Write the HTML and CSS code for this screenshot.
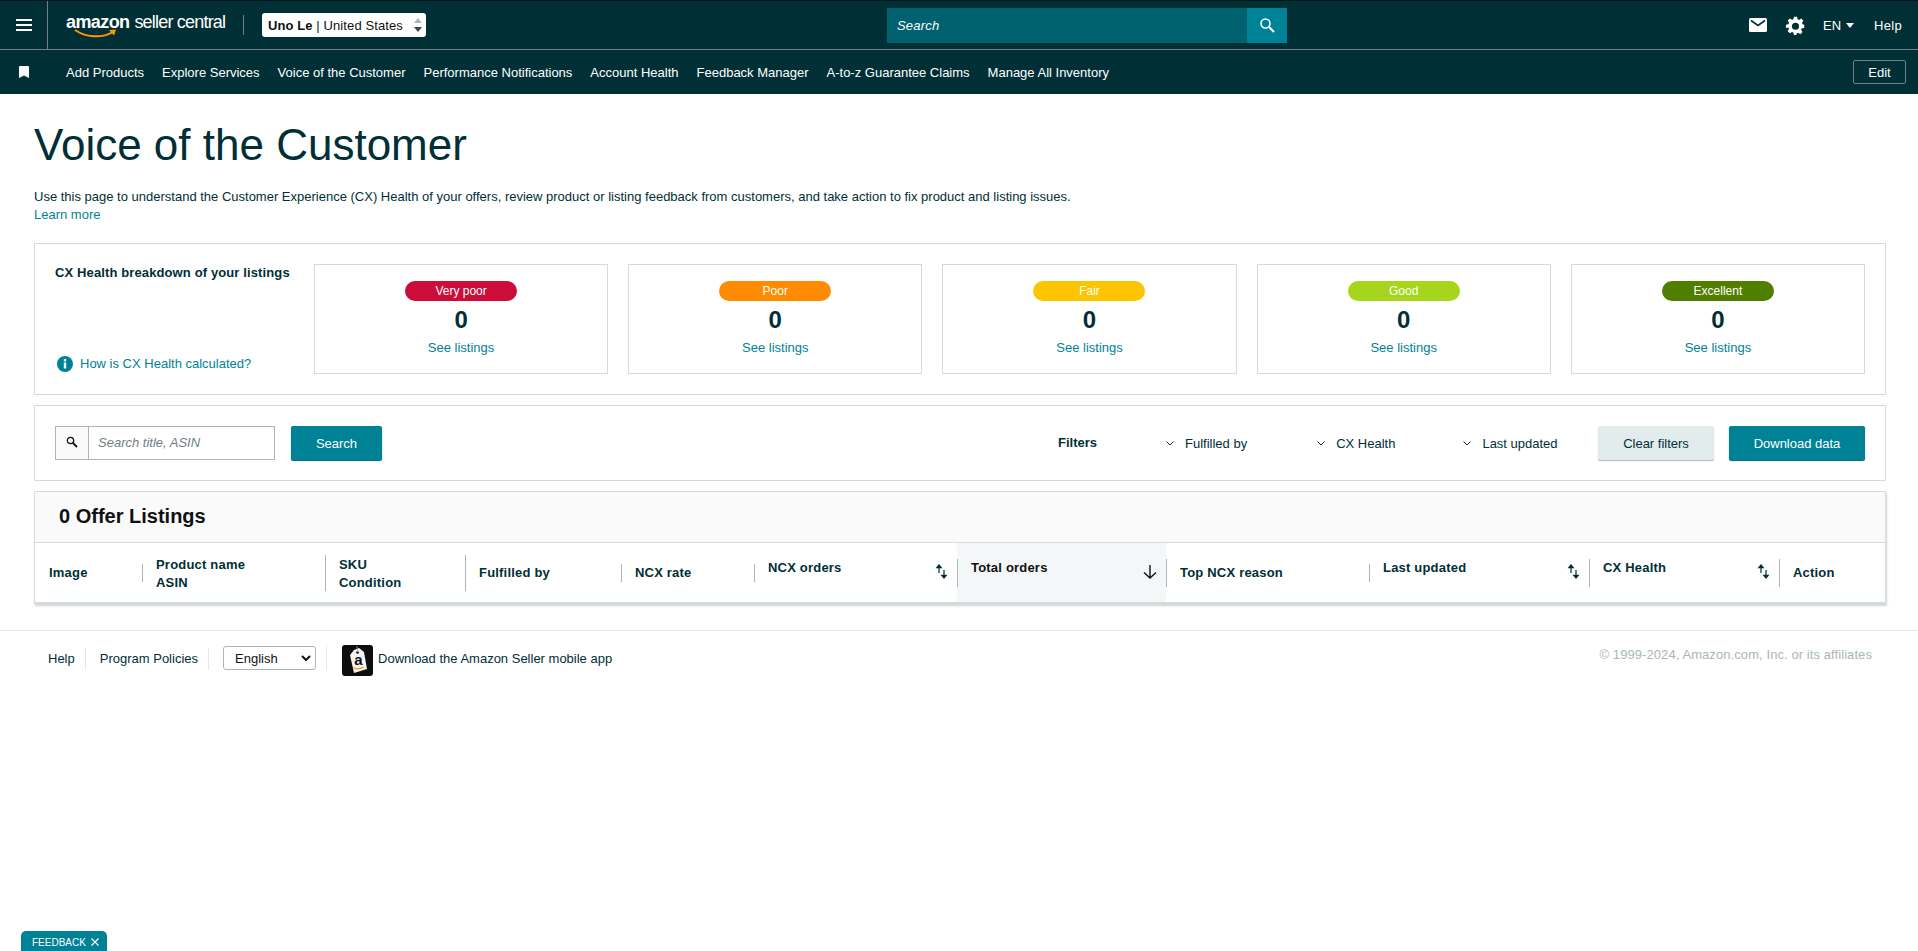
FILE: index.html
```html
<!DOCTYPE html>
<html lang="en">
<head>
  <meta charset="UTF-8">
  <title>Voice of the Customer</title>
  <link rel="stylesheet" href="styles.css">
</head>
<body>
  <header class="topbar">
    <div class="menu-cell">
      <svg class="menu-icon" viewBox="0 0 16 12" width="16" height="12"><path d="M0 1h16M0 6h16M0 11h16" stroke="#fff" stroke-width="2"/></svg>
    </div>
    <div class="logo">
      <span class="logo-az">amazon</span><span class="logo-sc">seller central</span>
      <svg class="swoosh" viewBox="0 0 44 10" width="44" height="10"><path d="M1 1c10 7 26 9 38 2" fill="none" stroke="#ff9900" stroke-width="2"/><path d="M35 1l7-.5-2 6z" fill="#ff9900"/></svg>
    </div>
    <div class="logo-sep"></div>
    <div class="account-select">
      <span><b>Uno Le</b> | United States</span>
      <span class="account-arrows"><i class="up"></i><i class="down"></i></span>
    </div>
    <div class="top-search">
      <span class="top-search-input">Search</span>
      <span class="top-search-btn">
        <svg viewBox="0 0 16 16" width="16" height="16"><circle cx="6.5" cy="6.5" r="4.5" fill="none" stroke="#fff" stroke-width="1.6"/><path d="M10 10l5 5" stroke="#fff" stroke-width="2"/></svg>
      </span>
    </div>
    <div class="top-right">
      <svg viewBox="0 0 18 14" width="18" height="14"><rect width="18" height="14" rx="1.5" fill="#fff"/><path d="M2 2.500l7 5 7-5" fill="none" stroke="#002f36" stroke-width="1.6"/></svg>
      <svg class="gear" viewBox="0 0 24 24" width="19" height="19"><path fill="#fff" fill-rule="evenodd" d="M10 1h4l.6 3.100 1.900.8 2.700-1.800 2.800 2.800-1.800 2.700.8 1.900L23 11v4l-3.100.6-.8 1.900 1.800 2.700-2.800 2.800-2.700-1.800-1.900.8L13 24h-3l-.6-3.100-1.900-.8-2.700 1.800-2.800-2.800 1.800-2.700-.8-1.900L0 15v-4l3.100-.6.8-1.900L2.100 5.800l2.800-2.800 2.700 1.800 1.900-.8zM12 8.500a4.500 4.500 0 1 0 0 9 4.500 4.500 0 0 0 0-9z"/></svg>
      <span class="lang">EN<i class="caret"></i></span>
      <span class="top-help">Help</span>
    </div>
  </header>

  <nav class="navbar">
    <svg class="bookmark" viewBox="0 0 10 12" width="10" height="12"><path d="M0 1a1 1 0 0 1 1-1h8a1 1 0 0 1 1 1v11L5 9.500 0 12z" fill="#fff"/></svg>
    <div class="nav-links">
      <a>Add Products</a>
      <a>Explore Services</a>
      <a>Voice of the Customer</a>
      <a>Performance Notifications</a>
      <a>Account Health</a>
      <a>Feedback Manager</a>
      <a>A-to-z Guarantee Claims</a>
      <a>Manage All Inventory</a>
    </div>
    <button class="edit-btn">Edit</button>
  </nav>

  <main class="page">
    <h1>Voice of the Customer</h1>
    <p class="intro">Use this page to understand the Customer Experience (CX) Health of your offers, review product or listing feedback from customers, and take action to fix product and listing issues.<br><a class="link">Learn more</a></p>

    <section class="box health">
      <div class="health-side">
        <strong>CX Health breakdown of your listings</strong>
        <a class="link how">
          <svg viewBox="0 0 16 16" width="16" height="16"><circle cx="8" cy="8" r="8" fill="#008296"/><rect x="6.800" y="6.500" width="2.400" height="6" fill="#fff"/><rect x="6.800" y="3" width="2.400" height="2.400" fill="#fff"/></svg>
          How is CX Health calculated?
        </a>
      </div>
      <div class="tile"><span class="pill very-poor">Very poor</span><b class="count">0</b><a class="link">See listings</a></div>
      <div class="tile"><span class="pill poor">Poor</span><b class="count">0</b><a class="link">See listings</a></div>
      <div class="tile"><span class="pill fair">Fair</span><b class="count">0</b><a class="link">See listings</a></div>
      <div class="tile"><span class="pill good">Good</span><b class="count">0</b><a class="link">See listings</a></div>
      <div class="tile"><span class="pill excellent">Excellent</span><b class="count">0</b><a class="link">See listings</a></div>
    </section>

    <section class="box filters">
      <div class="search-field">
        <span class="search-icon"><svg viewBox="0 0 12 12" width="12" height="12"><circle cx="4.500" cy="4.500" r="3.200" fill="none" stroke="#111" stroke-width="1.300"/><path d="M7 7l4 4" stroke="#111" stroke-width="1.800"/></svg></span>
        <span class="search-text">Search title, ASIN</span>
      </div>
      <button class="btn primary search-btn">Search</button>
      <strong class="filters-label">Filters</strong>
      <span class="filter f1"><svg viewBox="0 0 8 5" width="8" height="5"><path d="M.5.500L4 4 7.500.500" fill="none" stroke="#002f36"/></svg>Fulfilled by</span>
      <span class="filter f2"><svg viewBox="0 0 8 5" width="8" height="5"><path d="M.5.500L4 4 7.500.500" fill="none" stroke="#002f36"/></svg>CX Health</span>
      <span class="filter f3"><svg viewBox="0 0 8 5" width="8" height="5"><path d="M.5.500L4 4 7.500.500" fill="none" stroke="#002f36"/></svg>Last updated</span>
      <button class="btn secondary">Clear filters</button>
      <button class="btn primary download">Download data</button>
    </section>

    <section class="listings">
      <h2>0 Offer Listings</h2>
      <div class="thead">
        <div class="th">Image</div>
        <div class="th two-line">Product name<br>ASIN</div>
        <div class="th two-line tall">SKU<br>Condition</div>
        <div class="th tall">Fulfilled by</div>
        <div class="th">NCX rate</div>
        <div class="th sort">NCX orders<svg viewBox="0 0 13 15" width="13" height="15"><path d="M4 0L.5 4.200h7zM9 15l3.500-4.200h-7z" fill="#002f36"/><path d="M4 3v6M9 6v6" stroke="#002f36" stroke-width="1.200"/></svg></div>
        <div class="th sort mid active">Total orders<svg viewBox="0 0 14 14" width="14" height="14"><path d="M7 0v13M1 7.500L7 13l6-5.500" fill="none" stroke="#111" stroke-width="1.400"/></svg></div>
        <div class="th mid">Top NCX reason</div>
        <div class="th sort">Last updated<svg viewBox="0 0 13 15" width="13" height="15"><path d="M4 0L.5 4.200h7zM9 15l3.500-4.200h-7z" fill="#002f36"/><path d="M4 3v6M9 6v6" stroke="#002f36" stroke-width="1.200"/></svg></div>
        <div class="th sort mid">CX Health<svg viewBox="0 0 13 15" width="13" height="15"><path d="M4 0L.5 4.200h7zM9 15l3.500-4.200h-7z" fill="#002f36"/><path d="M4 3v6M9 6v6" stroke="#002f36" stroke-width="1.200"/></svg></div>
        <div class="th mid">Action</div>
      </div>
    </section>
  </main>

  <footer class="footer">
    <a class="foot-link">Help</a>
    <a class="foot-link">Program Policies</a>
    <div class="foot-lang"><span class="lang-box">English<svg viewBox="0 0 10 6" width="10" height="6"><path d="M1 1l4 4 4-4" fill="none" stroke="#111" stroke-width="2"/></svg></span></div>
    <svg class="app-icon" viewBox="0 0 31 31" width="31" height="31"><rect width="31" height="31" rx="3" fill="#0d0d0d"/><path d="M8 10l4-5 5-2 5 4 3 17-13 4z" fill="#f4f4f4"/><circle cx="15.500" cy="7.500" r="1.300" fill="#0d0d0d"/><path d="M15.500 7L15 1" stroke="#999" stroke-width=".8"/><text x="16.500" y="20" font-size="15" font-weight="bold" font-family="Liberation Sans" text-anchor="middle" fill="#111">a</text><path d="M11.500 22.500c3 2 7 1.500 10-.5" fill="none" stroke="#ff9900" stroke-width="1.300"/></svg>
    <span class="app-text">Download the Amazon Seller mobile app</span>
    <span class="copyright">© 1999-2024, Amazon.com, Inc. or its affiliates</span>
  </footer>

  <div class="feedback-tab">FEEDBACK<svg class="feedback-x" viewBox="0 0 8 8" width="8" height="8"><path d="M.5.500l7 7M7.500.500l-7 7" stroke="#fff" stroke-width="1.200"/></svg></div>
</body>
</html>
```

FILE: styles.css
```css
* { box-sizing: border-box; }
body { margin: 0; font-family: "Liberation Sans", Arial, sans-serif; font-size: 13px; color: #002f36; background: #fff; min-height: 951px; position: relative; overflow: hidden; }
a { text-decoration: none; }
.link { color: #008296; }

.topbar { height: 50px; background: #002f36; border-top: 1px solid #00171b; border-bottom: 1px solid #6f8084; display: flex; align-items: center; color: #fff; }
.menu-cell { width: 48px; height: 48px; border-right: 1px solid #6f8084; display: flex; align-items: center; justify-content: center; flex: none; }
.logo { position: relative; margin-left: 18px; width: 177px; height: 30px; line-height: 24px; white-space: nowrap; flex: none; }
.logo-az { font-size: 18px; font-weight: bold; letter-spacing: -.6px; }
.logo-sc { font-size: 18px; margin-left: 5px; letter-spacing: -.8px; }
.swoosh { position: absolute; left: 8px; top: 19px; }
.logo-sep { width: 1px; height: 20px; background: #6f8084; flex: none; }
.account-select { margin-left: 18px; width: 164px; height: 24px; background: #fff; border-radius: 3px; color: #111; display: flex; align-items: center; justify-content: space-between; padding: 0 4px 0 6px; letter-spacing: .1px; white-space: nowrap; flex: none; }
.account-arrows { display: flex; flex-direction: column; gap: 4px; }
.account-arrows i { width: 0; height: 0; border-left: 4px solid transparent; border-right: 4px solid transparent; display: block; }
.account-arrows .up { border-bottom: 5px solid #aab7b8; }
.account-arrows .down { border-top: 5px solid #444; }
.top-search { margin-left: 461px; width: 400px; height: 35px; display: flex; flex: none; }
.top-search-input { flex: 1; background: #00626f; font-style: italic; padding: 0 10px; line-height: 35px; letter-spacing: .2px; }
.top-search-btn { width: 40px; background: #008296; display: flex; align-items: center; justify-content: center; }
.top-right { margin-left: auto; display: flex; align-items: center; padding-right: 16px; }
.gear { margin-left: 19px; }
.lang { margin-left: 18px; display: flex; align-items: center; }
.caret { margin-left: 5px; border-left: 4.500px solid transparent; border-right: 4.500px solid transparent; border-top: 5px solid #fff; }
.top-help { margin-left: 20px; letter-spacing: .3px; }

.navbar { height: 44px; background: #002f36; display: flex; align-items: center; color: #fff; padding: 0 12px 0 19px; }
.nav-links { margin-left: 37px; display: flex; gap: 18px; white-space: nowrap; }
.edit-btn { margin-left: auto; width: 53px; height: 24px; background: transparent; border: 1px solid #6f8084; border-radius: 2px; color: #fff; font: 13px "Liberation Sans", Arial, sans-serif; padding: 0; }

.page { padding: 0 32px 0 34px; }
h1 { margin: 0; padding-top: 25px; font-size: 44px; line-height: 52px; font-weight: normal; color: #002f36; }
.intro { margin: 17px 0 0; line-height: 18px; height: 38px; }
.box { border: 1px solid #d5dbdb; background: #fff; }
.health { margin-top: 17px; height: 152px; padding: 20px; display: grid; grid-template-columns: 239px repeat(5, 1fr); column-gap: 20px; }
.health-side { display: flex; flex-direction: column; justify-content: space-between; padding-bottom: 1px; white-space: nowrap; }
.health-side strong { margin-top: 1px; letter-spacing: .12px; }
.how { display: flex; align-items: center; gap: 7px; margin-left: 2px; line-height: 18px; }
.tile { border: 1px solid #d5dbdb; display: flex; flex-direction: column; align-items: center; padding-top: 16px; }
.pill { width: 112px; height: 20px; border-radius: 10px; color: #fff; font-size: 12px; line-height: 20px; text-align: center; }
.very-poor { background: #cc0c39; }
.poor { background: #ff8c00; }
.fair { background: #ffc400; }
.good { background: #a5d61c; }
.excellent { background: #507f00; }
.count { font-size: 24px; line-height: 28px; margin: 5px 0 6px; }

.filters { margin-top: 10px; height: 76px; display: flex; align-items: center; padding: 0 20px; }
.search-field { width: 220px; height: 34px; border: 1px solid #aab7b8; display: flex; flex: none; }
.search-icon { width: 33px; background: #fafafa; border-right: 1px solid #aab7b8; display: flex; align-items: center; justify-content: center; padding-bottom: 3px; }
.search-text { padding: 0 9px; line-height: 32px; font-style: italic; color: #6f7f84; }
.btn { height: 34px; border: 0; border-radius: 2px; font: 13px "Liberation Sans", Arial, sans-serif; padding: 0; flex: none; }
.primary { background: #008296; color: #fff; box-shadow: 0 1px 1px #006070; }
.secondary { background: #e3ecec; color: #002f36; box-shadow: 0 1px 1px #aab7b8; width: 116px; margin-left: auto; }
.search-btn { width: 91px; margin-left: 16px; }
.download { width: 136px; margin-left: 15px; }
.filters-label { margin-left: 676px; margin-bottom: 2px; }
.filter { display: flex; align-items: center; gap: 11px; white-space: nowrap; }
.f1 { margin-left: 69px; }
.f2 { margin-left: 70px; }
.f3 { margin-left: 68px; }

.listings { margin-top: 10px; border: 1px solid #d5dbdb; border-bottom: 0; box-shadow: 1px 2px 2px #cfd6d6; }
h2 { margin: 0; height: 51px; background: #fafafa; border-bottom: 1px solid #d5dbdb; padding-left: 24px; font-size: 20px; line-height: 48px; color: #0f1111; }
.thead { display: grid; grid-template-columns: 107px 183px 140px 156px 133px 203px 209px 203px 220px 190px 1fr; height: 61px; border-bottom: 2px solid #d5dbdb; font-weight: bold; letter-spacing: .2px; }
.th { position: relative; padding: 0 9px 0 14px; display: flex; align-items: center; line-height: 18px; }
.th::before { content: ""; position: absolute; left: 0; top: 21px; height: 18px; width: 1px; background: #aab7b8; }
.th:first-child::before { display: none; }
.two-line { display: block; padding-top: 13px; }
.tall::before { top: 12px; height: 36px; }
.mid::before { top: 16px; height: 28px; }
.sort { align-items: flex-start; justify-content: space-between; padding-top: 16px; }
.sort svg { margin-top: 5px; flex: none; }
.active { background: #f3f7f7; color: #0f1111; }
.active svg { margin-top: 6px; }

.footer { margin-top: 26px; border-top: 1px solid #e6e9e9; height: 60px; display: flex; align-items: flex-start; padding: 14px 46px 0 48px; position: relative; }
.foot-link { margin-top: 3px; line-height: 22px; border-right: 1px solid #e6e9e9; padding-right: 10px; margin-right: 14px; }
.foot-lang { border-right: 1px solid #e6e9e9; padding-right: 10px; margin-right: 15px; height: 25px; }
.lang-box { width: 93px; height: 24px; border: 1px solid #aab7b8; border-radius: 3px; display: flex; align-items: center; justify-content: space-between; padding: 0 4px 0 11px; color: #111; margin-top: 1px; }
.app-icon { flex: none; margin-right: 5px; }
.app-text { line-height: 22px; margin-top: 3px; }
.copyright { margin-left: auto; color: #aab7b8; line-height: 18px; margin-top: 1px; letter-spacing: .08px; }

.feedback-tab { position: absolute; left: 21px; top: 931px; width: 86px; height: 20px; background: #008296; color: #fff; border-radius: 5px 5px 0 0; font-size: 10px; line-height: 23px; padding-left: 11px; }
.feedback-x { margin-left: 5px; }
```
